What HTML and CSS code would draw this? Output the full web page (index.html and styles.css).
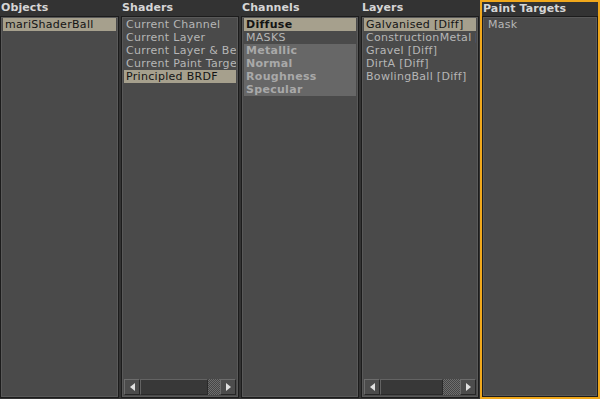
FILE: index.html
```html
<!DOCTYPE html>
<html lang="en">
<head>
    <meta charset="UTF-8">
    <meta name="viewport" content="width=device-width, initial-scale=1.0">
    <title>Shader Inputs</title>
    <link rel="stylesheet" href="styles.css">
</head>
<body>
    <div class="panels">
        <section class="panel">
            <h3 class="panel-title">Objects</h3>
            <div class="list">
                <div class="items">
                    <div class="item selected">mariShaderBall</div>
                </div>
            </div>
        </section>

        <section class="panel">
            <h3 class="panel-title">Shaders</h3>
            <div class="list">
                <div class="items">
                    <div class="item">Current Channel</div>
                    <div class="item">Current Layer</div>
                    <div class="item">Current Layer &amp; Below</div>
                    <div class="item">Current Paint Target</div>
                    <div class="item selected">Principled BRDF</div>
                </div>
                <div class="scrollbar">
                    <div class="sb-btn sb-left"></div>
                    <div class="sb-handle" style="width: 68px"></div>
                    <div class="sb-trough"></div>
                    <div class="sb-btn sb-right"></div>
                </div>
            </div>
        </section>

        <section class="panel">
            <h3 class="panel-title">Channels</h3>
            <div class="list">
                <div class="items">
                    <div class="item selected bold">Diffuse</div>
                    <div class="item">MASKS</div>
                    <div class="item group bold">Metallic</div>
                    <div class="item group bold">Normal</div>
                    <div class="item group bold">Roughness</div>
                    <div class="item group bold">Specular</div>
                </div>
            </div>
        </section>

        <section class="panel">
            <h3 class="panel-title">Layers</h3>
            <div class="list">
                <div class="items">
                    <div class="item selected">Galvanised [Diff]</div>
                    <div class="item">ConstructionMetal [Diff]</div>
                    <div class="item">Gravel [Diff]</div>
                    <div class="item">DirtA [Diff]</div>
                    <div class="item">BowlingBall [Diff]</div>
                </div>
                <div class="scrollbar">
                    <div class="sb-btn sb-left"></div>
                    <div class="sb-handle" style="width: 63px"></div>
                    <div class="sb-trough"></div>
                    <div class="sb-btn sb-right"></div>
                </div>
            </div>
        </section>

        <section class="panel active">
            <h3 class="panel-title">Paint Targets</h3>
            <div class="list">
                <div class="items">
                    <div class="item target">Mask</div>
                </div>
            </div>
        </section>
    </div>
</body>
</html>
```

FILE: styles.css
```css
body {
    margin: 0;
    background: #333333;
    font-family: 'DejaVu Sans', Verdana, sans-serif;
    font-size: 11px;
    user-select: none;
}

.panels {
    display: flex;
    height: 399px;
}

.panel {
    width: 120px;
    display: flex;
    flex-direction: column;
    box-sizing: border-box;
    padding: 0 1px 1px 1px;
}

.panel:first-child {
    padding-left: 0;
}

.panel.active {
    border: 2px solid #f0a81c;
    padding: 0;
}

.panel-title {
    margin: 0;
    height: 16px;
    line-height: 15px;
    font-size: 11px;
    font-weight: bold;
    color: #d6d6d6;
    padding-left: 1px;
    white-space: nowrap;
    letter-spacing: 0.1px;
}

.panel.active .panel-title {
    height: 14px;
    line-height: 13px;
}

.list {
    flex: 1;
    display: flex;
    flex-direction: column;
    background: #4a4a4a;
    border: 1px solid #1c1c1c;
    box-shadow: inset 0 0 0 1px #595959;
    padding: 1px;
    overflow: hidden;
}

.items {
    flex: 1;
    padding: 0 1px;
}

.item {
    height: 13px;
    line-height: 13px;
    padding-left: 2px;
    color: #b6b6b6;
    white-space: nowrap;
    overflow: hidden;
    letter-spacing: 0.3px;
}

.item.selected {
    background: #a6a08d;
    color: #141414;
}

.item.bold {
    font-weight: bold;
}

.item.group {
    background: #676767;
    color: #a9a9a9;
}

.item.target {
    padding-left: 3px;
    line-height: 14px;
    height: 14px;
}

/* horizontal scrollbar */
.scrollbar {
    display: flex;
    height: 16px;
    margin: 0 1px 1px 1px;
}

.sb-btn {
    width: 14px;
    height: 14px;
    background: #4c4c4c;
    border: 1px solid;
    border-color: #6c6c6c #262626 #262626 #6c6c6c;
    display: flex;
    align-items: center;
    justify-content: center;
}

.sb-btn::after {
    content: '';
    width: 0;
    height: 0;
    border-top: 4px solid transparent;
    border-bottom: 4px solid transparent;
}

.sb-left::after {
    border-right: 5px solid #e0e0e0;
}

.sb-right::after {
    border-left: 5px solid #e0e0e0;
}

.sb-handle {
    box-sizing: border-box;
    height: 16px;
    background: #383838;
    border: 1px solid;
    border-color: #636363 #2a2a2a #2a2a2a #636363;
}

.sb-trough {
    flex: 1;
    background: repeating-conic-gradient(#6e6e6e 0 25%, #454545 0 50%) 0 0 / 2px 2px;
}
```
